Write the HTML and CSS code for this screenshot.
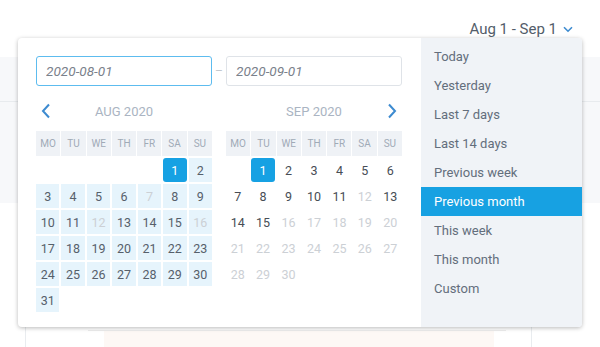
FILE: index.html
```html
<!DOCTYPE html>
<html>
<head>
<meta charset="utf-8">
<link rel="stylesheet" href="styles.css">
</head>
<body>
<div class="page">
  <header class="topbar">
    <button class="trigger">
      <span>Aug 1 - Sep 1</span>
      <svg class="trigger-chev" width="10" height="7" viewBox="0 0 10 7"><path d="M1 1.2 L5 5.2 L9 1.2" fill="none" stroke="#3d8bd0" stroke-width="1.6"/></svg>
    </button>
  </header>
  <section class="band">
    <div class="band-top"></div>
    <div class="band-body"></div>
  </section>
  <section class="content">
    <div class="card">
      <div class="card-line"></div>
      <div class="card-box"></div>
    </div>
  </section>

  <div class="popover">
    <div class="pane">
      <div class="inputs">
        <input class="date-input active" type="text" value="2020-08-01" readonly>
        <span class="dash">–</span>
        <input class="date-input" type="text" value="2020-09-01" readonly>
      </div>
      <div class="calendars">
        <div class="cal">
          <div class="nav">
            <svg class="chev" width="10" height="16" viewBox="0 0 10 16"><path d="M8 1.5 L2 8 L8 14.5" fill="none" stroke="#3d8bd0" stroke-width="2"/></svg>
            <div class="month">AUG 2020</div>
            <span></span>
          </div>
          <div class="weekdays">
            <div>MO</div><div>TU</div><div>WE</div><div>TH</div><div>FR</div><div>SA</div><div>SU</div>
          </div>
          <div class="days">
            <div class="d"></div><div class="d"></div><div class="d"></div><div class="d"></div><div class="d"></div>
            <div class="d sel">1</div><div class="d in">2</div>
            <div class="d in">3</div><div class="d in">4</div><div class="d in">5</div><div class="d in">6</div><div class="d in off">7</div><div class="d in">8</div><div class="d in">9</div>
            <div class="d in">10</div><div class="d in">11</div><div class="d in off">12</div><div class="d in">13</div><div class="d in">14</div><div class="d in">15</div><div class="d in off">16</div>
            <div class="d in">17</div><div class="d in">18</div><div class="d in">19</div><div class="d in">20</div><div class="d in">21</div><div class="d in">22</div><div class="d in">23</div>
            <div class="d in">24</div><div class="d in">25</div><div class="d in">26</div><div class="d in">27</div><div class="d in">28</div><div class="d in">29</div><div class="d in">30</div>
            <div class="d in">31</div>
          </div>
        </div>
        <div class="cal">
          <div class="nav">
            <span></span>
            <div class="month">SEP 2020</div>
            <svg class="chev" width="10" height="16" viewBox="0 0 10 16"><path d="M2 1.5 L8 8 L2 14.5" fill="none" stroke="#3d8bd0" stroke-width="2"/></svg>
          </div>
          <div class="weekdays">
            <div>MO</div><div>TU</div><div>WE</div><div>TH</div><div>FR</div><div>SA</div><div>SU</div>
          </div>
          <div class="days dark">
            <div class="d"></div>
            <div class="d sel">1</div><div class="d">2</div><div class="d">3</div><div class="d">4</div><div class="d">5</div><div class="d">6</div>
            <div class="d">7</div><div class="d">8</div><div class="d">9</div><div class="d">10</div><div class="d">11</div><div class="d off">12</div><div class="d">13</div>
            <div class="d">14</div><div class="d">15</div><div class="d off">16</div><div class="d off">17</div><div class="d off">18</div><div class="d off">19</div><div class="d off">20</div>
            <div class="d off">21</div><div class="d off">22</div><div class="d off">23</div><div class="d off">24</div><div class="d off">25</div><div class="d off">26</div><div class="d off">27</div>
            <div class="d off">28</div><div class="d off">29</div><div class="d off">30</div>
          </div>
        </div>
      </div>
    </div>
    <ul class="presets">
      <li>Today</li>
      <li>Yesterday</li>
      <li>Last 7 days</li>
      <li>Last 14 days</li>
      <li>Previous week</li>
      <li class="current">Previous month</li>
      <li>This week</li>
      <li>This month</li>
      <li>Custom</li>
    </ul>
  </div>
</div>
</body>
</html>
```
FILE: styles.css
```css
* { box-sizing: border-box; }
html, body { margin: 0; padding: 0; }
body {
  font-family: Roboto, "Noto Sans", Arial, sans-serif;
  background: #ffffff;
  width: 600px;
  height: 347px;
  overflow: hidden;
}
.page { position: relative; width: 600px; height: 347px; }

.topbar {
  height: 57px;
  display: flex;
  justify-content: flex-end;
  align-items: flex-start;
  padding-right: 27px;
}
.trigger {
  margin-top: 19px;
  border: 0;
  background: none;
  padding: 0;
  display: flex;
  align-items: center;
  gap: 6px;
  font-family: inherit;
  font-size: 15px;
  color: #535d6a;
  line-height: 20px;
}
.trigger-chev { margin-top: 1px; }

.band { background: #f7f8fa; height: 146px; }
.band-top { height: 45px; border-bottom: 1px solid #e8ebee; }

.content { padding-left: 25px; }
.card {
  width: 507px;
  height: 144px;
  border-left: 1px solid #e9ecef;
  border-right: 1px solid #e9ecef;
  padding-top: 127px;
}
.card-line { margin-left: 62px; width: 418px; height: 1px; background: #eeeeee; }
.card-box { margin-left: 78px; width: 390px; height: 20px; background: #fdf8f5; }

.popover {
  position: absolute;
  left: 18px;
  top: 38px;
  width: 564px;
  height: 289px;
  display: flex;
  background: #ffffff;
  border-radius: 4px;
  box-shadow: 0 1px 4px rgba(0, 0, 0, 0.28);
  overflow: hidden;
}
.pane {
  width: 403px;
  padding: 18px 0 0 18px;
}
.inputs { display: flex; align-items: center; width: 366px; }
.date-input {
  width: 176px;
  height: 30px;
  border: 1px solid #dfe3e8;
  border-radius: 3px;
  padding: 0 0 0 9px;
  font-family: Roboto, sans-serif;
  font-style: italic;
  font-size: 13.6px;
  color: #7a818b;
  background: #fff;
  outline: none;
}
.date-input.active { border-color: #5dbcef; }
.dash { width: 14px; text-align: center; color: #c3c8ce; font-size: 12px; }

.calendars { display: flex; gap: 14px; }
.cal { width: 176px; }
.nav {
  display: grid;
  grid-template-columns: 20px 1fr 20px;
  align-items: center;
  height: 22px;
  margin-top: 14px;
  margin-bottom: 9px;
}
.nav .chev { justify-self: center; }
.month { text-align: center; font-size: 13px; color: #aab4c2; }

.weekdays {
  display: grid;
  grid-template-columns: repeat(7, 1fr);
  column-gap: 1px;
  height: 25px;
}
.weekdays div {
  background: #eff2f6;
  font-size: 10px;
  color: #a0aab6;
  display: flex;
  align-items: center;
  justify-content: center;
}
.days {
  display: grid;
  grid-template-columns: repeat(7, 1fr);
  grid-auto-rows: 24px;
  gap: 2px;
  margin-top: 2px;
}
.d {
  display: flex;
  align-items: center;
  justify-content: center;
  font-size: 12.5px;
  color: #56606b;
}
.dark .d { color: #474d55; }
.d.in { background: #e6f4fc; }
.d.off, .dark .d.off { color: #ccd0d5; }
.d.sel, .dark .d.sel { background: #16a1e3; color: #ffffff; border-radius: 3px; }

.presets {
  list-style: none;
  margin: 0;
  padding: 4px 0 0 0;
  width: 161px;
  background: #f0f3f7;
}
.presets li {
  height: 29px;
  line-height: 30px;
  padding-left: 13px;
  font-size: 13px;
  color: #636e7c;
}
.presets li.current { background: #17a1e2; color: #ffffff; }
```
